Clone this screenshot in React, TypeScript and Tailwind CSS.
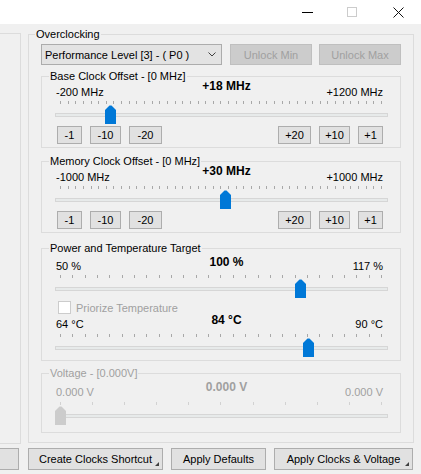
import type { ReactNode } from "react";

interface SliderProps {
  ticks: number;
  thumb: number;
  disabled?: boolean;
  className?: string;
}

// trackbar: tick row, track, and the thumb lying over the track
const Slider = ({ ticks, thumb, disabled, className }: SliderProps) => (
  <div className={`relative h-[23px] ${className ?? ""}`}>
    <div className="ml-[18px] flex h-[3px] w-[322px] justify-between">
      {Array.from({ length: ticks }).map((_, i) => (
        <span
          key={i}
          className={`h-full w-px ${disabled ? "bg-[#d2d2d2]" : "bg-[#a8a8a8]"}`}
        />
      ))}
    </div>
    <div className="ml-[13px] mt-[9px] h-[4px] w-[333px] border border-[#d6d6d6] bg-[#e7eaea]" />
    <svg
      className="absolute top-[4px]"
      style={{ left: thumb }}
      width="11"
      height="19"
      viewBox="0 0 11 19"
    >
      <path
        d="M0 5 L4.5 0.5 H6.5 L11 5 V19 H0 Z"
        fill={disabled ? "#cccccc" : "#0078d7"}
      />
    </svg>
  </div>
);

interface GroupProps {
  title: string;
  disabled?: boolean;
  className?: string;
  children: ReactNode;
}

const Group = ({ title, disabled, className, children }: GroupProps) => (
  <fieldset className={`w-[360px] border border-[#dcdcdc] ${className ?? ""}`}>
    <legend className={`ml-[7px] px-px ${disabled ? "text-[#a0a0a0]" : ""}`}>
      {title}
    </legend>
    {children}
  </fieldset>
);

interface LabelsProps {
  min: string;
  value: string;
  max: string;
  disabled?: boolean;
  side: string;
  className?: string;
}

const Labels = ({ min, value, max, disabled, side, className }: LabelsProps) => (
  <div
    className={`grid grid-cols-[1fr_auto_1fr] pl-[14px] pr-[3px] ${
      disabled ? "text-[#a0a0a0]" : ""
    } ${className ?? ""}`}
  >
    <span className={side}>{min}</span>
    <span className="text-[12px] font-bold">{value}</span>
    <span className={`pr-[14px] text-right ${side}`}>{max}</span>
  </div>
);

const Step = ({ w, children }: { w: string; children: ReactNode }) => (
  <button
    className={`flex h-[18px] items-center justify-center border border-[#adadad] bg-[#e1e1e1] ${w}`}
  >
    {children}
  </button>
);

const StepRow = () => (
  <div className="mt-[2px] flex pl-[15px]">
    <Step w="w-[25px]">-1</Step>
    <Step w="ml-[8px] w-[31px]">-10</Step>
    <Step w="ml-[8px] w-[33px]">-20</Step>
    <Step w="ml-[116px] w-[33px]">+20</Step>
    <Step w="ml-[8px] w-[31px]">+10</Step>
    <Step w="ml-[8px] w-[25px]">+1</Step>
  </div>
);

const Grip = () => (
  <svg className="absolute bottom-[3px] right-[3px]" width="4" height="4" viewBox="0 0 4 4">
    <path d="M4 0 V4 H0 Z" fill="#404040" />
  </svg>
);

const App = () => {
  return (
    <div className="h-[474px] w-[421px] overflow-hidden bg-[#f0f0f0] font-['Liberation_Sans',Arial,sans-serif] text-[11px] leading-[14px] text-black">
      {/* title bar */}
      <div className="flex h-[24px] justify-end bg-white">
        <div className="flex w-[46px] items-center justify-center pl-[2px]">
          <span className="h-px w-[11px] bg-black" />
        </div>
        <div className="flex w-[46px] items-center justify-center">
          <span className="h-[10px] w-[10px] border border-[#cccccc]" />
        </div>
        <div className="flex w-[46px] items-center justify-center">
          <svg width="11" height="11" viewBox="0 0 11 11">
            <path d="M0.5 0.5 L10.5 10.5 M10.5 0.5 L0.5 10.5" stroke="#111" strokeWidth="1" />
          </svg>
        </div>
      </div>

      <div className="flex items-start">
        <div className="mt-[9px] h-[411px] w-[21px] border-y border-r border-[#dcdcdc]" />

        <fieldset className="ml-[7px] mt-[3px] w-[386px] border border-[#dcdcdc]">
          <legend className="ml-[6px] px-px">Overclocking</legend>
          <div className="pb-[9px] pl-[12px]">
            <div className="mt-[3px] flex h-[21px]">
              <div className="flex w-[181px] items-center justify-between border border-[#acacac] bg-[#e3e3e3] pl-[3px] pr-[5px]">
                <span>Performance Level [3] - ( P0 )</span>
                <svg width="8" height="5" viewBox="0 0 8 5">
                  <path d="M0.5 0.5 L4 4 L7.5 0.5" fill="none" stroke="#404040" strokeWidth="1" />
                </svg>
              </div>
              <button className="ml-[8px] w-[82px] border border-[#bfbfbf] bg-[#cccccc] text-[#a0a0a0]">
                Unlock Min
              </button>
              <button className="ml-[7px] w-[82px] border border-[#bfbfbf] bg-[#cccccc] text-[#a0a0a0]">
                Unlock Max
              </button>
            </div>

            <Group title="Base Clock Offset - [0 MHz]" className="mt-[4px] pb-[3px]">
              <Labels className="-mt-[4px]" side="pt-[6px]" min="-200 MHz" value="+18 MHz" max="+1200 MHz" />
              <Slider className="mt-[2px]" ticks={43} thumb={63} />
              <StepRow />
            </Group>

            <Group title="Memory Clock Offset - [0 MHz]" className="mt-[6px] pb-[3px]">
              <Labels className="-mt-[4px]" side="pt-[6px]" min="-1000 MHz" value="+30 MHz" max="+1000 MHz" />
              <Slider className="mt-[2px]" ticks={43} thumb={178} />
              <StepRow />
            </Group>

            <Group title="Power and Temperature Target" className="mt-[8px] pb-[3px]">
              <Labels side="pt-[4px]" min="50 %" value="100 %" max="117 %" />
              <Slider className="mt-[2px]" ticks={27} thumb={253} />
              <div className="mt-[3px] flex h-[13px] items-center pl-[16px] text-[#a0a0a0]">
                <span className="h-[13px] w-[13px] border border-[#cccccc] bg-white" />
                <span className="ml-[5px]">Priorize Temperature</span>
              </div>
              <Labels className="-mt-[1px]" side="pt-[4px]" min="64 °C" value="84 °C" max="90 °C" />
              <Slider className="mt-[3px]" ticks={27} thumb={261} />
            </Group>

            <Group title="Voltage - [0.000V]" disabled className="mt-[5px] pb-[7px]">
              <Labels disabled side="pt-[5px]" min="0.000 V" value="0.000 V" max="0.000 V" />
              <Slider disabled className="mt-[3px]" ticks={11} thumb={13} />
            </Group>
          </div>
        </fieldset>
      </div>

      {/* bottom buttons */}
      <div className="mt-[4px] flex h-[22px]">
        <div className="w-[19px] border-y border-r border-[#adadad] bg-[#e1e1e1]" />
        <button className="relative ml-[9px] w-[135px] border border-[#adadad] bg-[#e1e1e1]">
          Create Clocks Shortcut
          <Grip />
        </button>
        <button className="ml-[8px] w-[95px] border border-[#adadad] bg-[#e1e1e1]">
          Apply Defaults
        </button>
        <button className="relative ml-[8px] w-[139px] border border-[#adadad] bg-[#e1e1e1]">
          Apply Clocks &amp; Voltage
          <Grip />
        </button>
      </div>
    </div>
  );
};

export default App;
